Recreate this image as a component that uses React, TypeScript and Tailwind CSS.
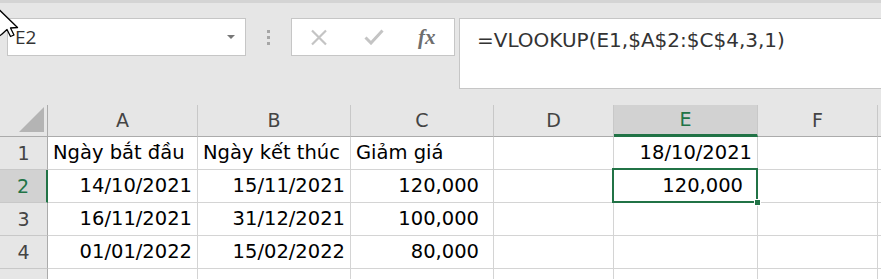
const COLS = ['A', 'B', 'C', 'D', 'E', 'F', ''];

const rows: { n: number; cells: string[] }[] = [
  { n: 1, cells: ['Ngày bắt đầu', 'Ngày kết thúc', 'Giảm giá', '', '18/10/2021', '', ''] },
  { n: 2, cells: ['14/10/2021', '15/11/2021', '120,000', '', '120,000', '', ''] },
  { n: 3, cells: ['16/11/2021', '31/12/2021', '100,000', '', '', '', ''] },
  { n: 4, cells: ['01/01/2022', '15/02/2022', '80,000', '', '', '', ''] },
  { n: 5, cells: ['', '', '', '', '', '', ''] },
];

// labels in row 1 sit left, numbers use the "#,##0 " format with extra right padding
function cellAlign(row: number, col: number) {
  if (row === 1 && col < 3) return 'justify-start pl-[5px]';
  if (col === 2 || (col === 4 && row === 2)) return 'justify-end pr-[14px]';
  return 'justify-end pr-[5px]';
}

export default function App() {
  return (
    <div className="relative w-[881px] h-[279px] overflow-hidden bg-[#e6e6e6] font-['DejaVu_Sans',sans-serif]">
      <div className="h-[3px] bg-[#d4d4d4]" />

      {/* formula bar */}
      <div className="flex items-start h-[102px] pt-[15px]">
        <div className="ml-[7px] w-[239px] h-[38px] bg-white border border-[#c6c6c6] flex items-center justify-between pl-[7px] pr-[10px]">
          <span className="text-[19px] text-[#333] font-['Open_Sans',sans-serif]">E2</span>
          <span className="w-0 h-0 border-l-[4px] border-r-[4px] border-t-[4px] border-l-transparent border-r-transparent border-t-[#777]" />
        </div>
        <div className="w-[45px] h-[38px] flex flex-col items-center justify-center gap-[3px]">
          <span className="w-[3px] h-[3px] bg-[#a6a6a6]" />
          <span className="w-[3px] h-[3px] bg-[#a6a6a6]" />
          <span className="w-[3px] h-[3px] bg-[#a6a6a6]" />
        </div>
        <div className="w-[164px] h-[38px] bg-white border border-[#c6c6c6] flex items-center">
          <svg className="ml-[18px]" width="18" height="17" viewBox="0 0 18 17">
            <path d="M2 1.5 L16 15.5 M16 1.5 L2 15.5" stroke="#c4c4c4" strokeWidth="2.2" fill="none" />
          </svg>
          <svg className="ml-[36px]" width="20" height="16" viewBox="0 0 20 16">
            <path d="M1.5 8.5 L7 14 L18.5 1.5" stroke="#c4c4c4" strokeWidth="3" fill="none" />
          </svg>
          <span className="ml-[34px] text-[21px] italic font-bold text-[#6e6e6e] font-['Liberation_Serif',serif] leading-none">fx</span>
        </div>
        <div className="ml-[4px] flex-1 h-[71px] bg-white border border-r-0 border-[#c6c6c6] pl-[17px] pt-[6px]">
          <span className="text-[20px] text-[#333] whitespace-nowrap">=VLOOKUP(E1,$A$2:$C$4,3,1)</span>
        </div>
      </div>

      {/* sheet */}
      <div className="grid grid-cols-[48px_150px_153px_143px_120px_144px_120px_40px] grid-rows-[32px_33px_33px_33px_33px_33px]">
        {/* corner */}
        <div className="border-r border-b border-[#ababab] flex items-end justify-end pr-[3px] pb-[4px]">
          <div className="w-0 h-0 border-l-[25px] border-b-[25px] border-l-transparent border-b-[#b4b4b4]" />
        </div>
        {COLS.map((c, i) => (
          <div
            key={`col${i}`}
            className={`flex items-center justify-center text-[19px] ${
              c === 'E'
                ? 'bg-[#d2d2d2] text-[#217346] border-b-[3px] border-b-[#217346] border-r border-r-[#c8c8c8]'
                : 'text-[#444] border-b border-b-[#ababab] border-r border-r-[#c8c8c8]'
            }`}
          >
            {c}
          </div>
        ))}

        {rows.map((r) => (
          <>
            <div
              key={`h${r.n}`}
              className={`flex items-center justify-center text-[19px] border-b border-b-[#c8c8c8] ${
                r.n === 2
                  ? 'bg-[#d2d2d2] text-[#217346] border-r-[2px] border-r-[#217346]'
                  : 'text-[#444] border-r border-r-[#ababab]'
              }`}
            >
              {r.n < 5 ? r.n : ''}
            </div>
            {r.cells.map((v, ci) => (
              <div
                key={`${r.n}-${ci}`}
                className={`relative bg-white flex items-center text-[19.5px] text-black whitespace-nowrap border-r border-b border-[#d4d4d4] ${cellAlign(r.n, ci)} ${
                  r.n === 2 && ci === 4 ? 'z-10' : ''
                }`}
              >
                {v}
                {r.n === 2 && ci === 4 && (
                  <>
                    <div className="absolute -left-[2px] -top-[2px] -right-[1px] -bottom-[1px] border-2 border-[#217346]" />
                    <div className="absolute -right-[4px] -bottom-[4px] w-[7px] h-[7px] bg-[#217346] border border-white" />
                  </>
                )}
              </div>
            ))}
          </>
        ))}
      </div>

      {/* mouse cursor */}
      <svg className="absolute left-0 top-0" width="22" height="40" viewBox="0 0 22 40">
        <path d="M-1 9.5 L17.5 27.5 L10.5 28 L14 35 L10.5 36.5 L7 29.5 L1.5 34.5 L-1 36 Z" fill="white" stroke="black" strokeWidth="1.3" strokeLinejoin="round" />
      </svg>
    </div>
  );
}
